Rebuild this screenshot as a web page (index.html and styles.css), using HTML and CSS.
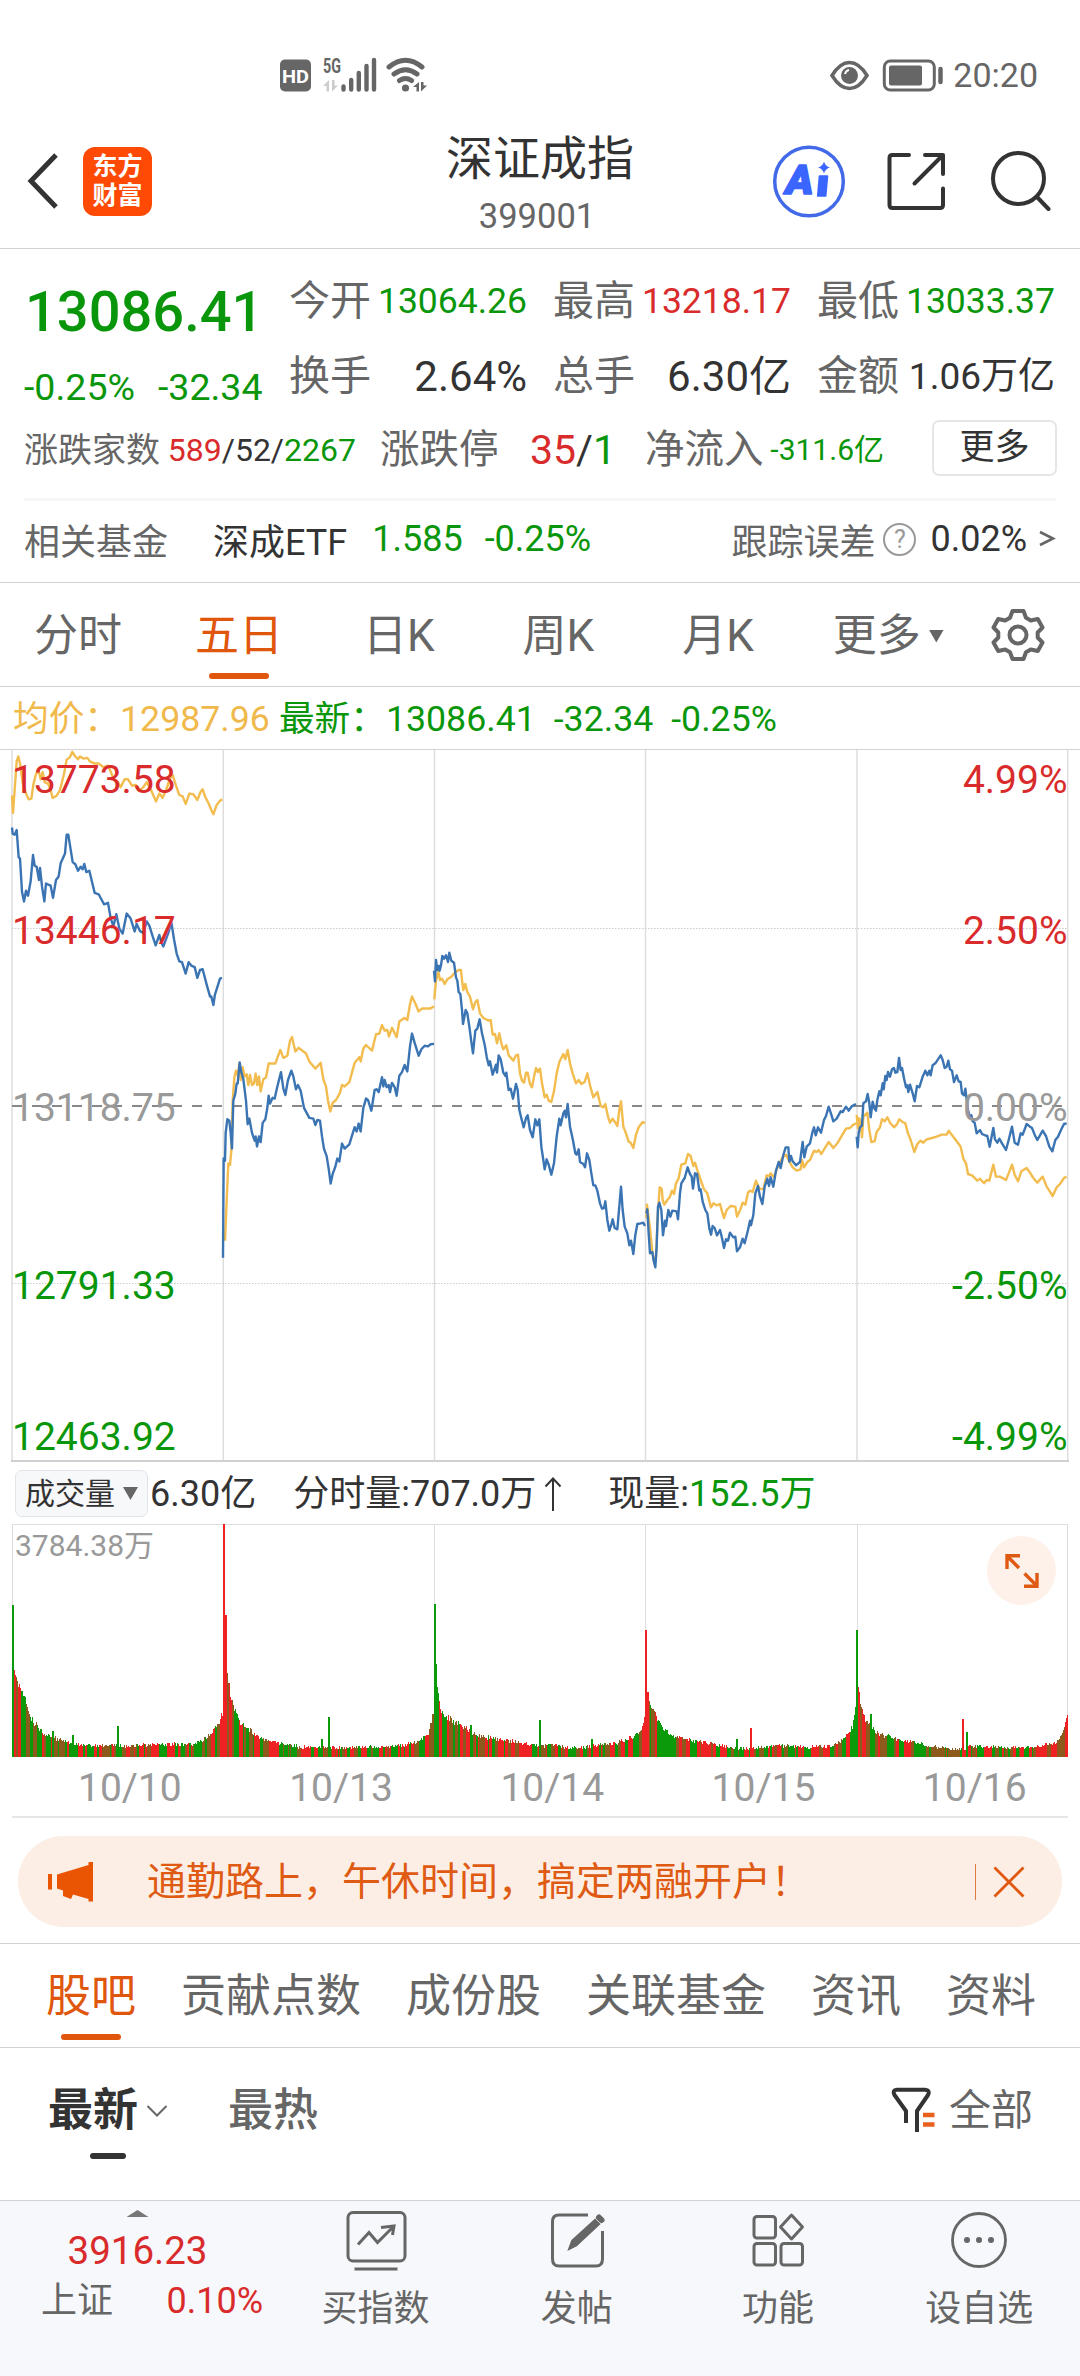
FILE: index.html
```html
<!DOCTYPE html>
<html lang="zh-CN">
<head>
<meta charset="utf-8">
<title>深证成指 399001</title>
<link rel="stylesheet" href="styles.css">
</head>
<body>
<div class="app">
  <div class="status">
    <svg class="status-left" width="150" height="36" viewBox="278 57 150 36">
      <rect x="280" y="59.500" width="31" height="32" rx="5" fill="#666"/>
      <text x="295.500" y="82.500" font-size="19" font-weight="700" fill="#fff" text-anchor="middle" textLength="27" lengthAdjust="spacingAndGlyphs">HD</text>
      <text x="323" y="73" font-size="21" font-weight="700" fill="#666" textLength="18" lengthAdjust="spacingAndGlyphs">5G</text>
      <path d="M323 86l6-6v11.500h-2.500v-5.500zM332 80v11.500l6-6h-3.500v-5.500z" fill="#ccc"/>
      <path d="M343.500 86.500v3M351.200 80v9.500M358.800 73v16.500M366.500 66v23.500M374 60v29.500" stroke="#666" stroke-width="4.400" stroke-linecap="round"/>
      <g fill="none" stroke="#666" stroke-width="5" stroke-linecap="round"><path d="M389 67Q405.500 53.500 422 67"/><path d="M394 74Q405.500 65.500 417 74"/><path d="M399.500 80.500Q405.500 76.500 411.500 80.500"/></g>
      <circle cx="405.500" cy="88" r="3.600" fill="#666"/>
      <path d="M413 87l6-5v9.500h-2.500v-4.500zM421 82v9.500l6-6h-3.500v-3.500z" fill="#666"/>
    </svg>
    <div class="status-right">
      <svg width="118" height="36" viewBox="828 57 118 36">
        <path d="M832 75.500Q840 62.500 849.500 62.500T867 75.500Q859 88.500 849.500 88.500T832 75.500z" fill="none" stroke="#666" stroke-width="3.500"/>
        <circle cx="849.500" cy="75.500" r="8.500" fill="#666"/><path d="M845 74q1-3.500 4-4" stroke="#fff" stroke-width="2" fill="none"/>
        <rect x="884.300" y="61" width="50" height="29" rx="6" fill="none" stroke="#666" stroke-width="3"/>
        <rect x="889" y="65.500" width="33" height="20" rx="2" fill="#666"/>
        <path d="M940.500 69v13" stroke="#666" stroke-width="4.500" stroke-linecap="round"/>
      </svg>
      <span>20:20</span>
    </div>
  </div>

  <header class="header">
    <div class="header-side">
      <svg width="34" height="60" viewBox="0 0 34 60"><path d="M30 4L5 30L30 56" fill="none" stroke="#333" stroke-width="5"/></svg>
      <div class="logo"><span>东方</span><span>财富</span></div>
    </div>
    <div class="title"><h1>深证成指</h1><p>399001</p></div>
    <div class="header-side header-actions">
      <svg width="280" height="76" viewBox="771 143 280 76" fill="none">
        <circle cx="809" cy="181.500" r="34.300" stroke="#4169e8" stroke-width="3.500"/>
        <g fill="#3a66ff" stroke="#3a66ff" stroke-width="1.600" stroke-linejoin="round"><text x="785.500" y="194" font-size="40" font-weight="900" font-style="italic" textLength="28" lengthAdjust="spacingAndGlyphs">A</text><path d="M819.500 176h8l-1.800 20h-8z"/><path stroke="none" d="M824 161.500q1.300 4.700 6 6-4.700 1.300-6 6-1.300-4.700-6-6 4.700-1.300 6-6z"/></g>
        <g stroke="#333" stroke-width="4" stroke-linecap="round" stroke-linejoin="round"><path d="M909 155h-16.500q-3 0-3 3v47q0 3 3 3h47.500q3 0 3-3v-16.500M925 155h18v19M943 155L914.500 183.500"/><circle cx="1018.500" cy="178.500" r="25.500"/><path d="M1037 197l11.500 12"/></g>
      </svg>
    </div>
  </header>

  <section class="quote">
    <div class="quote-main">
      <div class="last"><b>13086.41</b><p><span>-0.25%</span><span>-32.34</span></p></div>
      <dl class="stats">
        <div><dt>今开</dt><dd class="down s35">13064.26</dd></div>
        <div><dt>最高</dt><dd class="up s35">13218.17</dd></div>
        <div><dt>最低</dt><dd class="down s35">13033.37</dd></div>
        <div><dt>换手</dt><dd class="s42">2.64%</dd></div>
        <div><dt>总手</dt><dd class="s42">6.30亿</dd></div>
        <div><dt>金额</dt><dd class="s37">1.06万亿</dd></div>
      </dl>
    </div>
    <div class="breadth">
      <p class="counts"><span class="muted">涨跌家数</span><span><i class="up">589</i>/52/<i class="down">2267</i></span></p>
      <p class="limits"><span class="muted">涨跌停</span><span><b class="up">35</b>/<b class="down">1</b></span></p>
      <p class="flow"><span class="muted">净流入</span><span class="down">-311.6亿</span></p>
      <button class="more">更多</button>
    </div>
    <div class="fund">
      <span class="muted">相关基金</span>
      <span class="fund-name">深成ETF</span>
      <span class="down fund-price">1.585</span>
      <span class="down">-0.25%</span>
      <span class="muted fund-track">跟踪误差</span>
      <span class="help">?</span>
      <span>0.02%</span>
      <svg width="18" height="22" viewBox="0 0 18 22"><path d="M2 4L15 10.500L2 17" fill="none" stroke="#666" stroke-width="2.600"/></svg>
    </div>
  </section>

  <nav class="periods">
    <span>分时</span><span class="on">五日</span><span>日K</span><span>周K</span><span>月K</span><span>更多<i class="tri"></i></span>
    <svg width="54" height="56" viewBox="-27 -28 54 56" fill="none" stroke="#666" stroke-width="4" stroke-linejoin="round"><path d="M-5.500-24H5.500L8-17.300L12.800-14.500L19.800-16L24.500-7.500L19.700-2.500V2.500L24.500 7.500L19.800 16L12.800 14.500L8 17.300L5.500 24H-5.500L-8 17.300L-12.800 14.500L-19.800 16L-24.500 7.500L-19.700 2.500V-2.500L-24.500-7.500L-19.800-16L-12.800-14.500L-8-17.300Z"/><circle r="8.500"/></svg>
  </nav>

  <div class="legend"><span class="avg">均价：12987.96</span><span class="down">最新：13086.41</span><span class="down">-32.34</span><span class="down">-0.25%</span></div>

  <svg class="price-chart" width="1080" height="714" viewBox="0 749 1080 714" fill="none">
    <g stroke="#ddd" stroke-width="1.500"><path d="M0 749.500H1080" stroke="#d4d4d4" stroke-width="1"/><path d="M12 750V1462M223.300 750V1462M434.500 750V1462M645.500 750V1462M857 750V1462M1067.700 750V1462"/><path d="M11 1461H1069" stroke="#d0d0d0" stroke-width="2"/></g>
    <path d="M12 928.500H1068M12 1283.500H1068" stroke="#ccc" stroke-dasharray="1.500 1.500"/>
    <path d="M12 1106H1068" stroke="#888" stroke-width="2" stroke-dasharray="10 10"/>
    <g class="series">
      <g transform="translate(0 740) scale(.33333 .35714)">
        <polyline class="mean" points="36,155 39,204 44,140 50,60 55,46 60,65 68,120 78,150 86,166 94,164 100,125 108,95 116,86 122,110 128,90 134,118 144,122 152,140 158,162 170,156 180,140 192,95 200,55 210,48 217,33 224,44 234,54 240,46 250,52 262,50 270,60 284,66 296,66 310,76 324,72 332,88 340,108 352,116 362,132 374,110 384,110 396,128 408,126 420,140 430,132 440,118 450,134 460,155 468,172 478,150 488,162 498,140 510,108 518,98 528,128 538,154 548,158 557,179 568,150 580,152 592,168 602,145 608,138 616,160 626,178 634,196 640,208 650,182 660,170 667,166"/>
        <polyline class="mean" points="675,1402 680,1290 685,1186 690,1190 694,1150 698,1010 703,945 708,926 714,940 718,905 722,952 728,916 734,942 740,936 745,966 750,938 756,966 762,962 767,934 772,966 777,942 782,984 790,950 798,945 806,906 826,906 832,890 841,868 850,890 862,884 870,842 876,832 886,872 896,862 918,878 928,900 946,920 962,904 970,950 978,970 984,1010 991,1040 998,1016 1008,1008 1020,988 1026,966 1034,970 1048,958 1064,904 1078,888 1082,900 1090,864 1098,854 1116,870 1128,824 1138,822 1146,798 1154,814 1162,812 1167,830 1176,806 1190,832 1198,788 1214,778 1222,784 1230,740 1236,718 1246,738 1256,760 1266,752 1290,752 1302,746"/>
        <polyline class="price" points="36,245 38,262 44,265 50,252 56,328 60,332 66,425 72,452 78,422 84,436 92,395 99,322 104,352 110,355 117,392 120,358 126,410 133,452 138,402 152,408 159,442 168,392 176,382 182,345 195,318 200,265 205,265 210,295 218,342 226,348 234,366 242,355 248,362 253,347 259,370 268,366 284,428 296,432 312,460 324,456 332,498 340,522 349,488 358,528 368,542 380,486 392,500 404,536 410,515 420,535 430,540 440,508 448,520 458,550 467,575 478,546 484,566 490,578 505,540 514,510 522,558 530,598 538,620 546,622 557,654 566,622 574,632 584,636 592,666 600,644 608,642 620,685 630,718 634,718 640,742 645,712 652,692 660,668 666,666"/>
        <polyline class="price" points="669,1450 671,1172 675,1178 677,1100 682,1062 688,1066 692,1100 696,1144 700,1010 706,990 710,962 713,962 719,903 724,930 730,950 738,1010 743,1076 748,1060 756,1100 764,1122 767,1110 771,1138 777,1110 782,1126 788,1072 796,1062 802,1030 806,996 810,1018 818,1002 824,1004 832,970 843,930 850,976 856,994 864,952 874,926 880,942 888,978 894,966 902,982 912,1030 920,1044 928,1058 940,1060 946,1078 952,1064 960,1066 966,1110 972,1145 980,1165 986,1200 992,1242 998,1215 1006,1195 1012,1172 1018,1180 1026,1130 1034,1144 1048,1132 1056,1108 1064,1084 1070,1096 1076,1074 1082,1096 1090,1030 1098,1004 1104,1008 1114,1038 1124,980 1130,978 1136,986 1146,944 1150,970 1154,952 1160,972 1166,966 1170,986 1176,960 1184,972 1190,996 1198,940 1206,930 1214,910 1222,928 1230,858 1236,822 1244,848 1256,884 1264,866 1274,856 1284,858 1292,852 1302,851"/>
      </g>
      <g transform="translate(420 900) scale(.33333)">
        <polyline class="mean" points="43,298 48,242 55,216 60,240 66,236 74,252 82,238 94,230 104,218 116,210 123,210 126,240 130,270 136,252 142,276 150,290 159,328 166,306 172,300 180,340 190,354 206,362 212,360 218,404 225,402 231,430 238,400 244,430 250,448 259,436 266,466 280,482 288,466 294,464 300,520 306,542 312,548 318,518 323,518 330,552 336,562 342,530 348,504 354,516 360,506 366,550 374,592 380,584 386,602 394,606 402,574 410,520 418,486 430,462 436,478 443,450 450,490 458,520 468,550 476,540 484,552 494,546 502,520 510,556 520,592 532,576 542,618 550,622 556,612 564,650 570,668 578,656 586,668 592,678 598,630 603,604 610,680 618,700 626,725 632,728 640,744 648,704 656,682 668,666 675,670"/>
        <polyline class="mean" points="679,955 681,914 690,985 697,1056 703,1090 708,1070 713,950 719,862 725,866 728,900 733,914 742,900 750,890 756,872 762,882 768,850 776,835 784,794 796,790 804,762 812,768 820,798 825,788 832,810 842,840 852,868 862,880 873,922 880,910 890,916 900,912 906,934 912,954 920,930 932,918 946,920 951,950 962,926 968,908 976,914 984,878 990,872 998,876 1008,842 1018,866 1030,868 1040,826 1048,828 1052,820 1062,832 1070,808 1078,790 1088,772 1098,764 1108,784 1118,802 1130,812 1142,808 1146,780 1152,802 1162,786 1170,780 1182,752 1190,756 1196,750 1204,762 1214,745 1226,726 1234,736 1240,744 1252,730 1266,706 1278,686 1290,684 1300,674 1310,670"/>
        <polyline class="price" points="42,212 45,244 48,180 52,210 56,198 59,212 63,196 67,168 72,176 78,166 84,186 88,158 94,182 102,188 108,232 112,242 116,276 121,282 126,330 129,372 137,330 142,340 148,380 154,425 159,460 166,392 172,386 179,358 186,400 194,434 200,470 206,496 210,484 218,524 228,494 231,518 236,466 242,478 250,518 256,528 259,518 266,570 272,566 279,596 288,552 293,570 298,630 304,655 311,682 318,654 323,646 330,690 338,712 346,658 352,676 358,658 364,740 370,780 374,808 380,778 386,794 394,824 402,790 410,710 418,656 422,676 430,640 434,632 438,652 443,612 450,680 458,716 466,760 470,764 476,748 480,786 490,792 495,802 501,760 508,780 514,820 520,856 526,856 532,872 540,910 546,926 552,924 556,904 562,960 568,992 574,974 578,958 584,984 592,988 597,930 603,860 608,930 614,980 622,1000 628,1036 633,1022 640,1062 646,1005 652,972 662,970 670,968 675,978"/>
        <polyline class="price" points="679,940 682,928 686,1000 690,1060 697,1056 701,1082 706,1102 710,1040 714,920 718,908 724,930 729,1006 735,962 738,978 745,930 751,950 757,932 770,934 774,958 780,880 784,850 794,834 803,802 810,822 815,830 819,866 825,820 831,822 838,872 842,868 848,905 856,930 862,940 868,985 873,1004 878,978 884,984 891,1006 900,990 906,1014 912,1044 918,1018 924,1022 930,998 940,1012 946,1010 951,1054 960,1042 968,1016 974,1030 984,990 990,962 993,976 1000,945 1006,880 1014,858 1020,890 1027,912 1034,860 1042,836 1047,858 1052,832 1060,860 1068,812 1076,786 1082,804 1090,765 1097,742 1105,742 1108,785 1113,768 1118,784 1128,796 1140,786 1148,726 1153,772 1160,740 1170,730 1178,694 1182,682 1187,706 1194,682 1203,698 1212,660 1218,648 1226,620 1234,644 1240,664 1250,656 1262,634 1268,636 1278,620 1286,632 1296,618 1308,612"/>
      </g>
      <g transform="translate(640 1000) scale(.33333)">
        <polyline class="mean" points="650,345 654,385 658,355 662,370 666,412 670,350 682,338 688,390 694,426 704,424 710,396 720,382 726,358 734,364 742,352 750,368 762,382 770,374 778,358 788,366 796,370 804,400 812,420 823,456 832,432 842,422 850,428 860,418 876,414 890,410 905,404 920,404 926,392 938,408 950,424 962,440 970,476 978,490 984,522 996,526 1012,542 1020,536 1032,550 1040,540 1048,542 1060,494 1068,530 1080,530 1098,540 1106,520 1116,494 1124,524 1134,544 1144,514 1160,504 1170,518 1180,534 1192,548 1208,530 1220,560 1228,572 1238,588 1250,562 1260,552 1272,534 1280,530"/>
        <polyline class="price" points="650,410 653,442 656,400 660,382 666,376 670,310 678,304 683,282 688,310 692,352 698,305 703,325 708,332 712,300 718,274 722,286 728,250 731,268 736,228 740,240 744,216 750,230 756,208 762,204 766,218 772,216 777,174 782,210 786,204 792,235 798,262 802,256 805,276 810,254 818,280 824,304 831,258 838,262 848,230 856,212 862,226 868,212 872,226 878,196 886,190 902,166 908,180 914,204 920,200 925,182 930,208 936,212 942,246 950,226 956,244 962,246 966,280 972,286 976,266 984,330 990,352 994,346 998,364 1004,368 1010,400 1020,390 1026,402 1036,406 1042,408 1049,440 1060,384 1065,418 1072,428 1078,416 1086,430 1098,450 1106,420 1116,380 1124,428 1134,434 1142,400 1148,404 1160,372 1170,380 1176,384 1184,404 1192,420 1208,392 1218,408 1228,440 1237,454 1246,420 1254,410 1264,388 1272,372 1280,370"/>
      </g>
    </g>
    <g class="axis">
      <text x="12" y="792.500" class="t-up">13773.58</text><text x="12" y="944" class="t-up">13446.17</text><text x="12" y="1121" class="t-flat">13118.75</text><text x="12" y="1299" class="t-down">12791.33</text><text x="12" y="1450" class="t-down">12463.92</text>
      <g text-anchor="end"><text x="1067.500" y="792.500" class="t-up">4.99%</text><text x="1067.500" y="944" class="t-up">2.50%</text><text x="1067.500" y="1121" class="t-flat">0.00%</text><text x="1067.500" y="1299" class="t-down">-2.50%</text><text x="1067.500" y="1450" class="t-down">-4.99%</text></g>
    </g>
  </svg>

  <div class="vol-head">
    <button class="indicator">成交量<i class="tri"></i></button>
    <span>6.30亿</span><span class="minute">分时量:707.0万</span>
    <svg width="18" height="36" viewBox="0 0 18 36"><path d="M9 35V2.500M1.500 10.500L9 2.500L16.500 10.500" fill="none" stroke="#333" stroke-width="2"/></svg>
    <span class="now">现量:<i class="down">152.5万</i></span>
  </div>

  <div class="volume">
    <svg width="1080" height="234" viewBox="0 1524 1080 234" shape-rendering="crispEdges">
      <path d="M12 1524.500H1068M12 1525V1757M223.500 1525V1757M434.500 1525V1757M645.500 1525V1757M857 1525V1757M1067.700 1525V1757" stroke="#ddd" stroke-width="1" fill="none"/>
      <g id="bars"></g>
      <text x="15" y="1556" font-size="30" fill="#999">3784.38万</text>
    </svg>
    <div class="expand"><svg width="36" height="36" viewBox="0 0 36 36" fill="none" stroke="#df5a12" stroke-width="3.400"><path d="M16 2.700H3V16M3 3L15 15M20 33.300H33V20M33 33L20.500 20.500"/></svg></div>
  </div>
  <div class="dates"><span>10/10</span><span>10/13</span><span>10/14</span><span>10/15</span><span>10/16</span></div>

  <div class="banner">
    <svg width="46" height="42" viewBox="48 1860 46 42" fill="#ea5504"><path d="M48 1873h4v15.500h-4zM57 1873.500L88.500 1864V1861h4.500V1900.500h-4.500V1898L73 1893.500L71 1898L63 1895V1889.500L57 1887.500z"/></svg>
    <p>通勤路上，午休时间，搞定两融开户！</p>
    <i class="sep"></i>
    <svg width="32" height="32" viewBox="0 0 32 32"><path d="M1.500 1.500L30.500 30.500M30.500 1.500L1.500 30.500" stroke="#e0570f" stroke-width="2.800"/></svg>
  </div>

  <nav class="tabs"><span class="on">股吧</span><span>贡献点数</span><span>成份股</span><span>关联基金</span><span>资讯</span><span>资料</span></nav>

  <div class="sort">
    <span class="on">最新</span>
    <svg width="22" height="14" viewBox="0 0 22 14"><path d="M1.500 2L11 11.500L20.500 2" fill="none" stroke="#666" stroke-width="2"/></svg>
    <span class="hot">最热</span>
    <svg class="filter" width="44" height="48" viewBox="890 2086 44 48" fill="none"><path d="M905 2122V2110L893.500 2094Q891 2089 896 2088.700H924Q929.500 2089 927 2094L916 2110V2131" stroke="#333" stroke-width="4" stroke-linejoin="round"/><path d="M922 2114h11.500M922 2123.500h11.500" stroke="#e8601c" stroke-width="4.500"/></svg>
    <span class="all">全部</span>
  </div>

  <footer class="bar">
    <div class="index"><i></i><b>3916.23</b><p><span>上证</span><span class="up">0.10%</span></p></div>
    <div class="item"><svg width="62" height="62" viewBox="-31 -31 62 62" fill="none" stroke="#666" stroke-width="3"><rect x="-28" y="-27.500" width="57" height="48.500" rx="5"/><path d="M-21.500 29H21.500M-18 4.500L-7-7.500L1.500 2.500L17-13M5-12.500L18-14L16.500-5"/></svg><span>买指数</span></div>
    <div class="item"><svg width="62" height="62" viewBox="-31 -31 62 62" fill="none" stroke="#666" stroke-width="3"><path d="M11-25H-18Q-24.500-25-24.500-18.500V19Q-24.500 26-18 26H19Q25.500 26 25.500 19V-9"/><path d="M-7 8L-4.500 1L18-19.500L21.500-16L-1 5Z" fill="#666"/><path d="M22-22.500L24.500-20" stroke-width="6" stroke-linecap="round"/></svg><span>发帖</span></div>
    <div class="item"><svg width="62" height="62" viewBox="-31 -31 62 62" fill="none" stroke="#666" stroke-width="3" stroke-linejoin="round"><rect x="-24" y="-23.500" width="21.500" height="21.500" rx="3"/><rect x="-24" y="3.500" width="21.500" height="21.500" rx="3"/><rect x="3" y="3.500" width="21.500" height="21.500" rx="3"/><path d="M13.500-25L24.500-13L13.500-1L2.500-13Z"/></svg><span>功能</span></div>
    <div class="item"><svg width="62" height="62" viewBox="-31 -31 62 62" fill="#666"><circle r="26.500" fill="none" stroke="#666" stroke-width="2.800"/><circle cx="-12" r="3"/><circle r="3"/><circle cx="12" r="3"/></svg><span>设自选</span></div>
  </footer>
</div>
<script src="script.js"></script>
</body>
</html>
```
FILE: styles.css
```css
* { box-sizing: border-box; margin: 0; padding: 0; }
body { background: #fff; color: #333; font-family: Roboto, "Noto Sans CJK SC", sans-serif; }
i { font-style: normal; }
svg { display: block; flex: none; }
button { font: inherit; color: inherit; }
.app { width: 1080px; height: 2376px; display: flex; flex-direction: column; overflow: hidden; white-space: nowrap; }
.app > * { flex: none; }
.up { color: #d92b2b; }
.down { color: #0a960a; }
.muted { color: #666; }

.status { height: 114px; padding: 36px 42px 0 278px; display: flex; justify-content: space-between; align-items: center; }
.status-right { display: flex; align-items: center; gap: 7px; color: #666; font-size: 34px; line-height: 36px; }

.header { height: 135px; border-bottom: 1px solid #d2d2d2; display: grid; grid-template-columns: 300px 1fr 310px; }
.header-side { display: flex; align-items: center; gap: 23px; padding-left: 26px; }
.header-actions { padding-left: 1px; }
.logo { width: 69px; height: 69px; border-radius: 12px; background: #ff4a05; color: #fff; display: flex; flex-direction: column; align-items: center; justify-content: center; font-size: 25px; font-weight: 700; line-height: 29px; }
.title { text-align: center; padding: 17px 0 0 10px; }
.title h1 { font-size: 47px; font-weight: 400; line-height: 56px; }
.title p { font-size: 34.5px; line-height: 40px; margin-top: 9px; padding-right: 6px; color: #666; }

.quote { height: 334px; border-bottom: 1px solid #d2d2d2; padding: 15px 24px 0; display: flex; flex-direction: column; }
.quote-main { display: flex; height: 150px; }
.last { width: 265px; padding-top: 11px; color: #0a960a; }
.last b { display: block; font-size: 56px; font-weight: 500; line-height: 75px; padding-left: 1px; }
.last p { display: flex; gap: 23px; font-size: 37.500px; line-height: 75px; }
.stats { flex: 1; display: grid; grid-template-columns: repeat(3, 238px); column-gap: 26px; grid-auto-rows: 75px; line-height: 75px; }
.stats div { display: flex; justify-content: space-between; }
.stats dt { color: #666; font-size: 41px; }
.s35 { font-size: 35.500px; }
.s37 { font-size: 37px; }
.s42 { font-size: 42px; }
.breadth { display: flex; align-items: center; height: 84px; padding-bottom: 12px; }
.breadth p { display: flex; align-items: center; justify-content: space-between; line-height: 60px; }
.counts { width: 332px; font-size: 32px; }
.counts .muted { font-size: 34px; }
.limits { width: 236px; margin-left: 24px; font-size: 41px; }
.limits .muted, .flow .muted { font-size: 39.500px; }
.limits b { font-weight: 400; }
.flow { width: 239px; margin-left: 29px; font-size: 30px; }
.more { margin: 0 -1px 4px auto; width: 125px; height: 56px; border: 2px solid #e6e6e6; border-radius: 7px; background: #fff; font-size: 35px; line-height: 50px; }
.fund { border-top: 3px solid #f6f6f6; height: 83px; padding-bottom: 4px; display: flex; align-items: center; font-size: 36px; }
.fund-name { margin-left: 45px; }
.fund-price { margin: 0 22px 0 25px; }
.fund-track { margin-left: auto; }
.help { width: 33px; height: 33px; border: 2.500px solid #999; border-radius: 50%; color: #999; font-size: 25px; line-height: 29px; text-align: center; margin: 0 14px 0 8px; }
.fund svg { margin-left: 11px; }

.periods { height: 104px; border-bottom: 1px solid #d2d2d2; padding-top: 3px; display: flex; align-items: center; color: #666; font-size: 44px; line-height: 101px; }
.periods span { position: relative; margin-left: 72px; }
.periods span:first-child { margin-left: 34px; }
.periods span:nth-child(2) { margin-left: 73px; }
.periods span:nth-child(3) { margin-left: 80px; }
.periods span:nth-child(4) { margin-left: 88px; }
.periods span:nth-child(5) { margin-left: 88px; }
.periods span:nth-child(6) { margin-left: 79px; display: flex; align-items: center; }
.periods svg { margin: 0 0 2px 47px; }
.on { color: #e0560c; }
.periods .on::after, .tabs .on::after { content: ""; position: absolute; left: 50%; bottom: 8px; width: 60px; margin-left: -30px; height: 6px; border-radius: 3px; background: #e0560c; }
.tri { width: 15px; height: 13px; background: #666; clip-path: polygon(0 0, 100% 0, 50% 100%); margin-left: 8px; }

.legend { height: 62px; padding-left: 13px; display: flex; font-size: 35.700px; line-height: 64px; }
.legend span + span { margin-left: 18px; }
.legend .avg + span { margin-left: 9px; }
.avg { color: #f0b94c; }

.series polyline { stroke-width: 2.400; vector-effect: non-scaling-stroke; stroke-linejoin: round; }
.mean { stroke: #f2bc4e; }
.price { stroke: #3b74b3; }
.axis { font-size: 39px; }
.t-up { fill: #d92b2b; }
.t-down { fill: #0a960a; }
.t-flat { fill: #999; }

.vol-head { height: 61px; padding: 0 0 0 15px; display: flex; align-items: center; font-size: 36px; line-height: 60px; }
.indicator { width: 133px; height: 47px; margin-right: 2px; border: 1.500px solid #e0e4e8; border-radius: 7px; background: #f7f8fa; display: flex; align-items: center; padding-left: 9px; font-size: 30px; line-height: 44px; }
.minute { margin: 0 8px 0 37px; }
.now { margin-left: 46px; }

.volume { position: relative; height: 234px; }
.expand { position: absolute; left: 987px; top: 12px; width: 69px; height: 69px; border-radius: 50%; background: #fef1ea; display: grid; place-items: center; }
.dates { height: 60px; margin: 0 12px; border-bottom: 2px solid #e6e6e6; display: grid; grid-template-columns: repeat(5, 1fr); color: #999; font-size: 39px; line-height: 61px; }
.dates span { padding-left: 66px; }

.banner { margin: 18px 18px 16px; height: 91px; border-radius: 46px; background: #fceee5; color: #df5a12; display: flex; align-items: center; padding: 0 37px 0 30px; }
.banner p { margin-left: 53px; font-size: 39px; line-height: 88px; }
.sep { margin-left: auto; margin-right: 17px; width: 1.500px; height: 36px; background: #df7a45; }

.tabs { height: 105px; border-top: 1px solid #d2d2d2; border-bottom: 1px solid #d2d2d2; padding-left: 46px; display: flex; gap: 45px; color: #666; font-size: 45px; line-height: 106px; }
.tabs span { position: relative; }
.tabs .on::after { bottom: 7px; }

.sort { height: 152px; padding: 0 47px 26px 48px; display: flex; align-items: center; font-size: 45px; line-height: 124px; color: #666; }
.sort .on { position: relative; color: #333; font-weight: 700; margin-right: 8px; }
.sort .on::after { content: ""; position: absolute; left: 42px; bottom: 14px; width: 36px; height: 6px; border-radius: 3px; background: #333; }
.hot { font-weight: 500; margin-left: 60px; }
.filter { margin-left: auto; margin-right: 14px; }
.all { font-size: 42px; }

.bar { flex: 1; border-top: 1px solid #d0d2d4; background: #f7f8fb; display: grid; grid-template-columns: 275px repeat(4, 1fr); color: #666; font-size: 36px; }
.index { display: flex; flex-direction: column; align-items: center; padding-top: 9px; }
.index i { width: 22px; height: 7px; background: #777; clip-path: polygon(50% 0, 100% 100%, 0 100%); }
.index b { font-size: 38.500px; font-weight: 400; line-height: 46px; margin-top: 11px; color: #d92b2b; }
.index p { align-self: stretch; display: flex; justify-content: space-between; padding: 0 12px 0 41px; line-height: 50px; margin-top: 2px; }
.item { display: flex; flex-direction: column; align-items: center; padding-top: 8px; }
.item span { line-height: 50px; margin-top: 13px; }
```
FILE: script.js
```js
// Volume bars: each day is a list of [offset px, height px] points, plus isolated spikes.
const DAYS = [
  { x: 12, env: [[0,110],[1,96],[3,84],[5,75],[10,70],[13,58],[17,44],[22,35],[30,26],[40,20],[55,15],[70,12],[106,11],[115,11],[140,12],[180,13],[195,20],[204,31],[211,48]], spikes: [[0,152,'g'],[105,31,'g'],[60,22,'g'],[40,26,'g']] },
  { x: 223, env: [[0,147],[2,140],[3,104],[5,80],[8,60],[12,46],[18,34],[28,26],[40,18],[60,13],[75,10],[95,10],[120,9],[150,10],[180,11],[195,16],[205,24],[211,50]], spikes: [[2,142,'r'],[0,233,'r'],[105,40,'g'],[98,18,'g']] },
  { x: 434, env: [[0,110],[2,98],[3,76],[6,52],[12,42],[25,34],[40,23],[70,17],[90,14],[105,11],[120,12],[135,9],[150,10],[180,14],[200,21],[207,28],[211,46]], spikes: [[0,153,'g'],[105,37,'g'],[36,32,'g'],[157,18,'g']] },
  { x: 645, env: [[0,80],[2,72],[4,58],[10,44],[18,28],[25,23],[45,17],[65,14],[85,9],[105,8],[125,11],[150,11],[165,9],[190,12],[200,20],[207,32],[211,56]], spikes: [[0,127,'r'],[105,29,'r'],[91,18,'g']] },
  { x: 856, env: [[0,80],[2,72],[4,60],[8,40],[14,34],[20,25],[40,18],[60,15],[75,10],[100,8],[125,11],[150,9],[180,10],[200,15],[207,26],[211,44]], spikes: [[0,127,'g'],[14,43,'g'],[106,38,'r'],[110,25,'g']] }
];
const BASE = 1757;
const COLORS = { r: '#ee2222', g: '#0a9a0a', m: '#8b5a1c' };
let seed = 4242;
const rand = () => (seed = (seed * 16807) % 2147483647) / 2147483647;
let bars = '';

const bar = (x, h, w, c) => `<path d="M${x} ${BASE}v${-Math.round(h)}h${w}V${BASE}z" fill="${COLORS[c]}"/>`;

function level(env, x) {
  for (let i = 1; i < env.length; i++) {
    if (x <= env[i][0]) {
      const [x0, y0] = env[i - 1], [x1, y1] = env[i];
      return y0 + (y1 - y0) * (x - x0) / (x1 - x0);
    }
  }
  return env[env.length - 1][1];
}

DAYS.forEach(day => {
  let color = 'm', run = 0;
  for (let i = 0; i <= 211; i++) {
    if (run-- <= 0) {
      const k = rand();
      color = k < .34 ? 'r' : k < .7 ? 'g' : 'm';
      run = Math.floor(rand() * 4);
    }
    const h = level(day.env, i) * (.88 + rand() * .12) + rand() * 3.5 - 1;
    bars += bar(day.x + i, h, 1, color);
  }
});
DAYS.forEach(day => day.spikes.forEach(([x, h, c]) => { bars += bar(day.x + x, h, 2, c); }));

document.getElementById('bars').innerHTML = bars;
```
